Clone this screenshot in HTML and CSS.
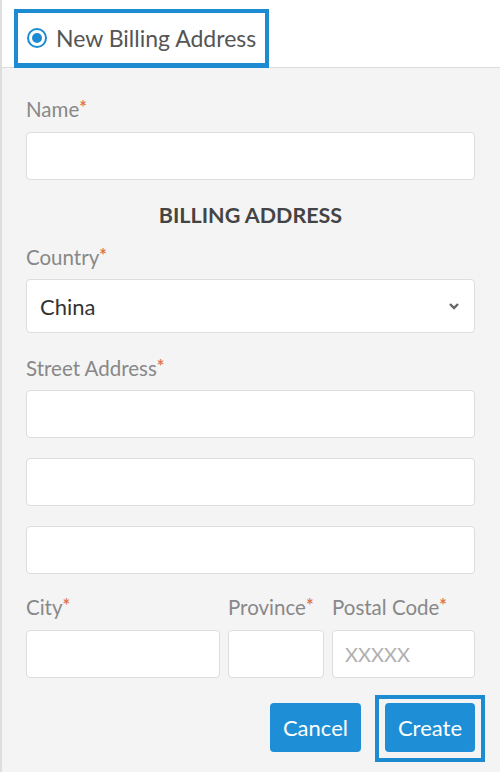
FILE: index.html
```html
<!DOCTYPE html>
<html>
<head>
    <link rel="stylesheet" href="styles.css">
</head>
<body>
    <div class="panel">
        <div class="panel-head">
            <label class="choice">
                <span class="radio"><span class="dot"></span></span>
                New Billing Address
            </label>
        </div>
        <div class="form">
            <label class="field-label">Name<span class="req">*</span></label>
            <input type="text" class="field">

            <h2>BILLING ADDRESS</h2>

            <label class="field-label">Country<span class="req">*</span></label>
            <div class="select">
                <span>China</span>
                <svg width="12" height="8" viewBox="0 0 12 8"><path d="M2 2 L6 6 L10 2" fill="none" stroke="#666" stroke-width="2.4"/></svg>
            </div>

            <label class="field-label street">Street Address<span class="req">*</span></label>
            <input type="text" class="field">
            <input type="text" class="field gap">
            <input type="text" class="field gap">

            <div class="row">
                <div class="col city">
                    <label class="field-label">City<span class="req">*</span></label>
                    <input type="text" class="field">
                </div>
                <div class="col province">
                    <label class="field-label">Province<span class="req">*</span></label>
                    <input type="text" class="field">
                </div>
                <div class="col postal">
                    <label class="field-label">Postal Code<span class="req">*</span></label>
                    <input type="text" class="field" placeholder="XXXXX">
                </div>
            </div>

            <div class="actions">
                <button class="btn">Cancel</button>
                <span class="focus-box"><button class="btn">Create</button></span>
            </div>
        </div>
    </div>
</body>
</html>
```

FILE: styles.css
```css
body {
    margin: 0;
    padding: 0;
    font-family: Lato, "Open Sans", sans-serif;
    background-color: #f4f4f4;
}

.panel {
    width: 500px;
    height: 772px;
    border-left: 2px solid #dedede;
    box-sizing: border-box;
    background-color: #f4f4f4;
    overflow: hidden;
}

.panel-head {
    background-color: #fff;
    height: 68px;
    border-bottom: 1px solid #dcdcdc;
    padding: 9px 0 0 12px;
    box-sizing: border-box;
}

.choice {
    display: flex;
    align-items: center;
    width: 255px;
    height: 59px;
    box-sizing: border-box;
    border: 4px solid #1c8bd2;
    border-bottom-width: 5px;
    padding-left: 9px;
    font-size: 23px;
    color: #555;
}

.radio {
    width: 20px;
    height: 20px;
    border: 2px solid #1c8bd2;
    border-radius: 50%;
    box-sizing: border-box;
    display: flex;
    align-items: center;
    justify-content: center;
    margin-right: 9px;
}

.dot {
    width: 10px;
    height: 10px;
    border-radius: 50%;
    background-color: #1c8bd2;
}

.form {
    padding: 29px 25px 0 24px;
    display: flex;
    flex-direction: column;
}

.field-label {
    display: block;
    font-size: 20.5px;
    line-height: 24px;
    color: #888;
    margin-bottom: 11px;
}

.req {
    color: #e0784f;
    font-size: 18px;
    font-weight: bold;
    vertical-align: top;
    line-height: 20px;
}

.field {
    height: 48px;
    border: 1px solid #ddd;
    border-radius: 4px;
    background-color: #fff;
    box-sizing: border-box;
    margin: 0;
    padding: 0 12px;
    font-family: Lato, sans-serif;
    font-size: 20px;
    width: 100%;
}

.field::placeholder {
    color: #b0b0b0;
}

.gap {
    margin-top: 20px;
}

h2 {
    margin: 23px 0 18px;
    font-size: 21.5px;
    line-height: 24px;
    font-weight: bold;
    color: #444;
    text-align: center;
}

.select {
    height: 54px;
    border: 1px solid #ddd;
    border-radius: 4px;
    background-color: #fff;
    box-sizing: border-box;
    display: flex;
    align-items: center;
    justify-content: space-between;
    padding: 0 14px 0 13px;
    margin-top: -1px;
    font-size: 22px;
    color: #333;
}

.street {
    margin-top: 23px;
    margin-bottom: 10px;
}

.row {
    display: flex;
    gap: 8px;
    margin-top: 21px;
}

.col .field-label {
    white-space: nowrap;
    margin-bottom: 11px;
}

.city {
    width: 194px;
}

.province {
    width: 96px;
}

.postal {
    flex: 1;
}

.actions {
    display: flex;
    justify-content: flex-end;
    align-items: center;
    gap: 14px;
    margin-top: 25px;
}

.btn {
    display: block;
    height: 49px;
    padding: 0 13px;
    border: none;
    border-radius: 4px;
    background-color: #1e8fd6;
    color: #fff;
    font-family: Lato, sans-serif;
    font-size: 22px;
}

.focus-box {
    border: 4px solid #1c8bd2;
    padding: 4px 6px 6px;
    margin: -8px -10px -10px 0;
}
```
